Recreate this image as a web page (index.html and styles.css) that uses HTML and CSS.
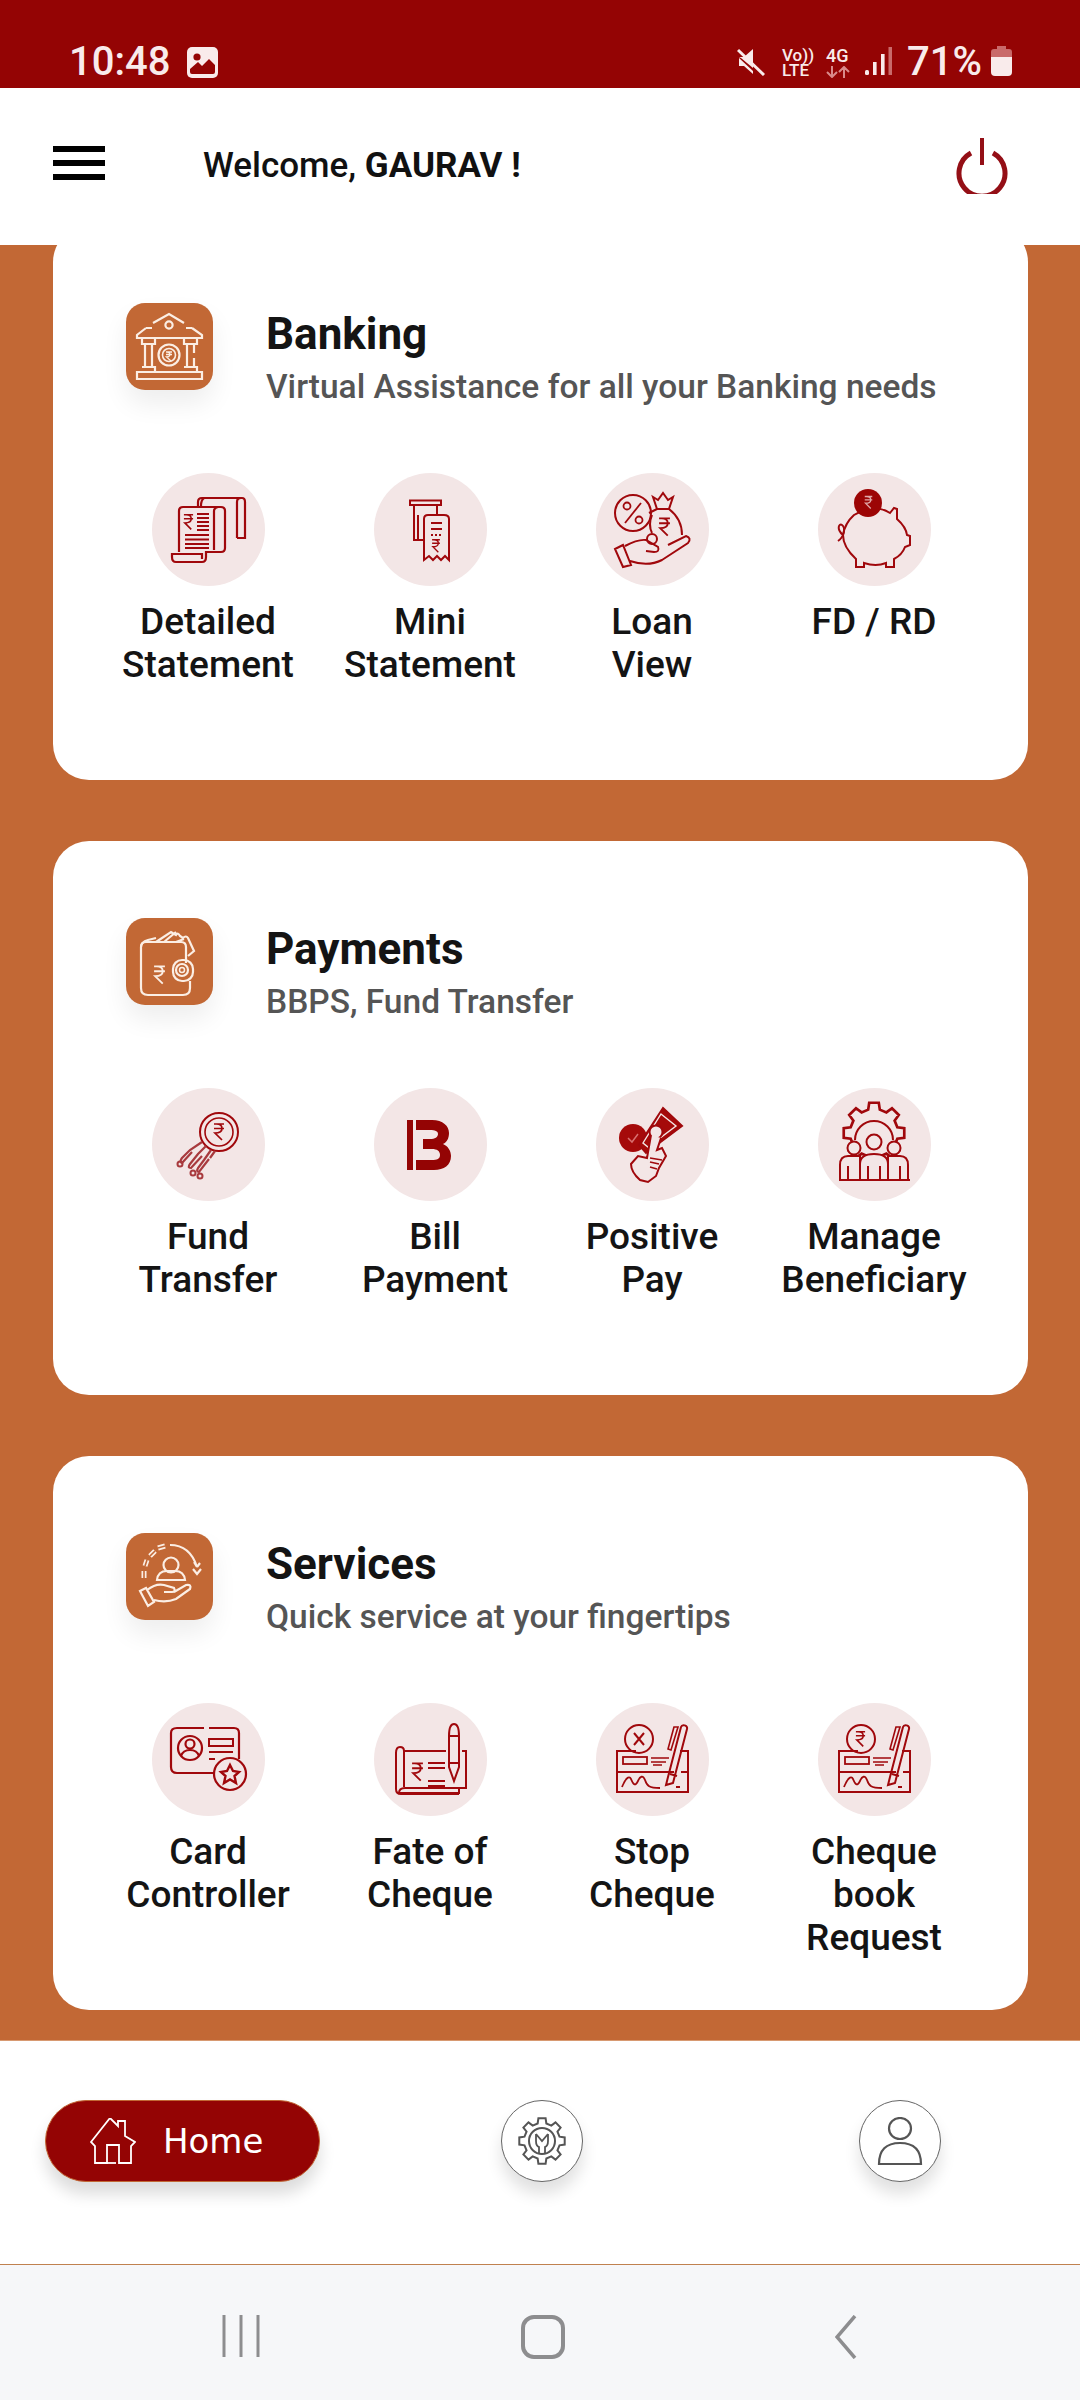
FILE: index.html
```html
<!DOCTYPE html>
<html lang="en">
<head>
<meta charset="utf-8">
<title>Welcome</title>
<link rel="stylesheet" href="styles.css">
</head>
<body>
<svg class="defs" width="0" height="0" aria-hidden="true">
  <defs>
    <symbol id="rupee" viewBox="0 0 12 18" overflow="visible"><path d="M1 1H11M1 5.5H11M3.5 1C8 1 9 3 9 5.5C9 8 7 10 2 10L9 17" fill="none" stroke="currentColor" stroke-width="1.7"/></symbol>
    <symbol id="gear" viewBox="0 0 48 48"><path transform="translate(24 24)" d="M-4.35-17.5L-3.6-22.7L3.6-22.7L4.35-17.5L9.3-15.45L13.5-18.6L18.6-13.5L15.45-9.3L17.5-4.35L22.7-3.6L22.7 3.6L17.5 4.35L15.45 9.3L18.6 13.5L13.5 18.6L9.3 15.45L4.35 17.5L3.6 22.7L-3.6 22.7L-4.35 17.5L-9.3 15.45L-13.5 18.6L-18.6 13.5L-15.45 9.3L-17.5 4.35L-22.7 3.6L-22.7-3.6L-17.5-4.35L-15.45-9.3L-18.6-13.5L-13.5-18.6L-9.3-15.45Z" fill="none" stroke="currentColor" stroke-width="2"/></symbol>
    <symbol id="cheque" viewBox="0 0 113 113">
      <path d="M40 48H21V89H92V48H84M21 69H78M85 69H92" fill="none" stroke="currentColor" stroke-width="2"/>
      <rect x="27" y="54" width="24" height="7" fill="none" stroke="currentColor" stroke-width="1.8"/>
      <path d="M55 55H73M55 59H70M57 62H66" fill="none" stroke="currentColor" stroke-width="1.6"/>
      <path d="M26 84C29 76 33 72 35 76C37 81 39 84 42 78C44 73 47 72 49 77C51 83 53 85 64 85" fill="none" stroke="currentColor" stroke-width="1.8"/>
      <path d="M77 80L70 82L72 74L85 24C86 21 92 22 91 26ZM74 71L81 73M80 84H84" fill="none" stroke="currentColor" stroke-width="2"/>
      <path d="M78 24L72 46L75 47L82 24Z" fill="none" stroke="currentColor" stroke-width="1.6"/>
    </symbol>
  </defs>
</svg>
<div class="phone">
  <div class="statusbar">
    <div class="status-left">
      <span class="clock">10:48</span>
      <svg class="status-image" viewBox="0 0 31 31"><rect width="31" height="31" rx="5" fill="#f9ebeb"/><circle cx="10" cy="10" r="3.6" fill="#940404"/><path d="M3 25V22L11 15L15 19L22 12L28 18V25Q28 27 26 27H5Q3 27 3 25Z" fill="#940404"/></svg>
    </div>
    <div class="status-right">
      <svg class="status-mute" viewBox="0 0 28 28"><path d="M2 9H7L16 1V20L4 10ZM2 10V18H7L16 26V23Z" fill="#f9ebeb"/><path d="M1 2L27 27" stroke="#f9ebeb" stroke-width="3"/></svg>
      <span class="volte"><span>Vo))</span><span>LTE</span></span>
      <span class="net"><span>4G</span><svg class="net-arrows" viewBox="0 0 25 12"><path d="M6 0V11M1 6L6 11L11 6M18 12V1M13 6L18 1L23 6" fill="none" stroke="#d98a8a" stroke-width="2"/></svg></span>
      <svg class="status-signal" viewBox="0 0 27 30"><rect y="24" width="4" height="5" rx="1.5" fill="#f9ebeb"/><rect x="8" y="16" width="3.6" height="13" fill="#f9ebeb"/><rect x="16" y="8" width="3.6" height="21" fill="#f9ebeb"/><rect x="23.5" y="1" width="3.5" height="28" fill="#c96a6a"/></svg>
      <span class="battery-pct">71%</span>
      <svg class="status-battery" viewBox="0 0 21 30"><path d="M6 0H15V3H18Q21 3 21 6V11H0V6Q0 3 3 3H6Z" fill="#c96a6a"/><path d="M0 11H21V26Q21 30 17 30H4Q0 30 0 26Z" fill="#f9ebeb"/></svg>
    </div>
  </div>

  <header class="topbar">
    <div class="menu-btn"><span></span><span></span><span></span></div>
    <p class="welcome">Welcome, <b>GAURAV !</b></p>
    <svg class="power" viewBox="0 0 52 56"><path d="M15 15A23 23 0 1 0 37 15" fill="none" stroke="#940f16" stroke-width="5"/><path d="M26 0V27" stroke="#940f16" stroke-width="4"/></svg>
  </header>

  <main class="content">
    <section class="card card-first">
      <div class="card-head">
        <div class="head-icon">
          <svg viewBox="0 0 87 87" fill="none" stroke="#fbeee4" stroke-width="2.2">
            <path d="M27 20L43 11L58 20M20 25L11 32V35H76V32L66 25M20 25H26M60 25H66"/><circle cx="43" cy="22" r="3.6"/>
            <path d="M16 35V41H29V35M58 35V41H71V35M19 41V64M26 41V64M61 41V64M68 41V50M68 55V64M16 64H29V69M58 64H71V69M11 69H76V76H11Z"/>
            <circle cx="43" cy="52" r="10.5"/><circle cx="43" cy="52" r="6.5" stroke-width="1.6"/>
            <path d="M40 49H46M40 51.500H46M41 49C45 49 45 54 40.500 54L45 58" stroke-width="1.3"/>
          </svg>
        </div>
        <div class="head-text"><h2>Banking</h2><p>Virtual Assistance for all your Banking needs</p></div>
      </div>
      <div class="items">
        <div class="item">
          <div class="bubble"><svg viewBox="0 0 113 113" fill="none" stroke="#a0080c" stroke-width="2.2">
            <path d="M46 33V29Q46 25 50 25H90Q93 25 93 29V65H85"/><path d="M52 25Q49 27 49 33M85 65V29Q85 25 89 25" />
            <path d="M27 79V38Q27 34 31 34H69Q73 34 73 38V75Q73 79 69 79H54V84Q54 89 50 89H24Q20 89 20 84V81H50V86"/>
            <path d="M66 34Q62 35 62 38V77"/>
            <use href="#rupee" x="31" y="40" width="11" height="18" color="#a0080c" stroke="none"/>
            <path d="M45 41H57M45 45H57M45 49H57M45 53H57M45 57H57" stroke-width="1.9"/>
            <path d="M33 62H57M33 66.500H57M33 71H57M33 75H57" stroke-width="2.2"/>
          </svg></div>
          <span class="label">Detailed Statement</span>
        </div>
        <div class="item">
          <div class="bubble"><svg viewBox="0 0 113 113" fill="none" stroke="#a0080c" stroke-width="2">
            <rect x="36" y="27.500" width="31" height="4.500" stroke-width="2"/><path d="M40 32V67H49M63 32V42"/><path d="M44 42V67"/>
            <path d="M50 87V46Q50 42 54 42H70Q75 42 75 46V87L71 83L67 87L63 83L59 87L55 83Z"/>
            <path d="M57 50H68M57 56H68M57 62H59M61 62H63M65 62H67" stroke-width="1.9"/>
            <use href="#rupee" x="57" y="66" width="10" height="14" color="#a0080c" stroke="none"/>
          </svg></div>
          <span class="label">Mini Statement</span>
        </div>
        <div class="item">
          <div class="bubble"><svg viewBox="0 0 113 113" fill="none" stroke="#a0080c" stroke-width="2">
            <circle cx="37" cy="40" r="18"/><path d="M29 50L45 30" stroke-width="1.8"/><circle cx="31" cy="33" r="3.500" stroke-width="1.8"/><circle cx="43" cy="47" r="3.500" stroke-width="1.8"/>
            <path d="M61 36L57 24L62 27L67 20L72 27L77 24L73 36Q86 46 86 62"/><path d="M61 36H73"/><path d="M53 40Q61 36 61 36M56 60Q52 52 56 42"/>
            <use href="#rupee" x="62" y="44" width="13" height="20" color="#a0080c" stroke="none"/>
            <path d="M19 76L27 72L35 92L27 94ZM29 73Q42 66 50 67L62 74Q64 79 58 79L50 78M34 88Q52 94 66 87L92 70Q96 65 90 63L72 72"/>
            <circle cx="56" cy="66" r="5"/>
          </svg></div>
          <span class="label">Loan<br>View</span>
        </div>
        <div class="item">
          <div class="bubble"><svg viewBox="0 0 113 113" fill="none" stroke="#a0080c" stroke-width="2">
            <path d="M36 42Q57 30 72 40L76 35L79 36V46Q88 54 89 62L92 63V72L87 74Q84 82 76 86V94H68V90Q58 94 46 90V94H38V86Q25 74 25 62Q27 50 36 42Z"/>
            <path d="M25 62C18 56 21 50 24 52C28 55 26 64 20 68"/>
            <circle cx="50" cy="30" r="14" fill="#9c0505" stroke="none"/>
            <use href="#rupee" x="46" y="22" width="9" height="15" color="#e0a8a8" stroke="none"/>
          </svg></div>
          <span class="label">FD / RD</span>
        </div>
      </div>
    </section>

    <section class="card">
      <div class="card-head">
        <div class="head-icon">
          <svg viewBox="0 0 87 87" fill="none" stroke="#fbeee4" stroke-width="2.200">
            <path d="M60 45V29Q60 24 55 24H20Q15 24 15 29V70Q15 77 22 77H57Q64 77 64 70V63"/>
            <path d="M15 29Q15 24 22 22L30 20M30 24L45 14L50 17Q52 14 54 18L57 20Q60 17 62 20L68 33L62 38M38 24L50 14M50 24L58 21"/>
            <rect x="47" y="42" width="20" height="21" rx="9"/><circle cx="56" cy="52" r="6"/><circle cx="56" cy="52" r="2.500" stroke-width="1.500"/>
            <use href="#rupee" x="27" y="47" width="13" height="20" color="#fbeee4" stroke="none"/>
          </svg>
        </div>
        <div class="head-text"><h2>Payments</h2><p>BBPS, Fund Transfer</p></div>
      </div>
      <div class="items">
        <div class="item">
          <div class="bubble"><svg viewBox="0 0 113 113" fill="none" stroke="#a83a3e" stroke-width="2">
            <circle cx="67" cy="44" r="19" stroke="#a0080c"/><circle cx="67" cy="44" r="14" stroke="#a0080c" stroke-width="1.600"/>
            <use href="#rupee" x="61" y="35" width="12" height="18" color="#a0080c" stroke="none"/>
            <path d="M50 54L38 62L30 70Q27 74 30 75L40 64M54 58L46 66L38 76Q35 80 39 80L50 68M59 62L52 72L46 80Q44 84 47 84L57 71M63 63L58 70" stroke-width="2.200"/>
            <circle cx="28" cy="76" r="2.500"/><circle cx="41" cy="85" r="2.500"/><circle cx="48" cy="88" r="2.500"/>
          </svg></div>
          <span class="label">Fund<br>Transfer</span>
        </div>
        <div class="item">
          <div class="bubble"><svg viewBox="0 0 113 113"><path fill="#940404" d="M33 32H39V82H33ZM42 32H58C69 32 75 38 75 45C75 50 73 54 69 56C74 58 77 63 77 68C77 77 70 82 60 82H42V72H58C63 72 66 71 66 67C66 63 63 61 58 61H49V51H56C61 51 64 49 64 46C64 43 61 42 56 42H42Z"/></svg></div>
          <span class="label label-shift">Bill Payment</span>
        </div>
        <div class="item">
          <div class="bubble"><svg viewBox="0 0 113 113" fill="none" stroke="#a0080c" stroke-width="2">
            <circle cx="37" cy="50" r="14" fill="#a50a0a" stroke="none"/><path d="M32 50L36 54L42 46" stroke="#d87070" stroke-width="1.500"/>
            <path d="M67 20L86 38L50 65L43 57Z" fill="#a50a0a"/><path d="M65 26L80 38L52 59L47 55Z" stroke="#f3e6e6" stroke-width="1.400"/>
            <circle cx="60" cy="44" r="6.500" fill="#f3e6e6"/>
            <path d="M55 47L51 70L42 68L35 76Q35 84 44 92L52 94L60 88L63 80L70 68L66 60L61 62L65 50" fill="#f3e6e6"/>
            <path d="M54 74L63 76M54 79L61 81M54 70L66 72" stroke-width="1.600"/>
          </svg></div>
          <span class="label">Positive<br>Pay</span>
        </div>
        <div class="item">
          <div class="bubble"><svg viewBox="0 0 113 113" fill="none" stroke="#a0080c" stroke-width="2">
            <use href="#gear" x="24" y="13" width="64" height="64" color="#a0080c"/>
            <path d="M37 52A19 19 0 0 1 75 52"/>
            <rect x="21" y="40" width="71" height="15" fill="none" stroke="none"/>
            <path d="M22 92V77Q22 68 30 68H42V92ZM90 92V77Q90 68 82 68H70V92ZM42 92V76Q42 66 56 66Q70 66 70 76V92Z" fill="#f3e6e6"/>
            <path d="M30 78V92M82 78V92M50 78V92M62 78V92M21 92H92"/>
            <circle cx="36" cy="60" r="6.500" fill="#f3e6e6"/><circle cx="76" cy="60" r="6.500" fill="#f3e6e6"/><circle cx="56" cy="54" r="7.500" fill="#f3e6e6"/>
          </svg></div>
          <span class="label">Manage Beneficiary</span>
        </div>
      </div>
    </section>

    <section class="card">
      <div class="card-head">
        <div class="head-icon">
          <svg viewBox="0 0 87 87" fill="none" stroke="#fbeee4" stroke-width="2.200">
            <circle cx="45" cy="32" r="7.500"/><path d="M31 47Q32 38 41 38H49Q58 38 59 47Z"/>
            <path d="M44 12Q64 12 71 34M71 34L68 29M71 34L74 30M67 36L71 41L75 36"/>
            <path d="M18 45L18 38M19 33L21 27M24 23L29 18M32 15L39 13" stroke-width="5"/><path d="M18 45L18 38M19 33L21 27M24 23L29 18M32 15L39 13" stroke="#c26835" stroke-width="1.600"/>
            <path d="M14 58L20 55L28 69L22 73ZM21 57Q30 50 38 52L48 55Q50 59 46 59L38 59M28 67Q40 70 50 66L64 56Q66 51 60 52L48 59"/>
          </svg>
        </div>
        <div class="head-text"><h2>Services</h2><p>Quick service at your fingertips</p></div>
      </div>
      <div class="items">
        <div class="item">
          <div class="bubble"><svg viewBox="0 0 113 113" fill="none" stroke="#a0080c" stroke-width="2.200">
            <path d="M52 25H25Q19 25 19 30V64Q19 70 25 70H63M57 25H82Q87 25 87 30V56"/>
            <circle cx="38" cy="45" r="12"/><circle cx="38" cy="41" r="4.500"/><path d="M29 53Q31 47 38 47Q45 47 47 53"/>
            <rect x="57" y="36" width="24" height="7" stroke-width="2"/><path d="M57 49H81M57 56H63" stroke-width="2.200"/>
            <circle cx="78" cy="71" r="16" fill="#f3e6e6"/><path d="M78 62L81 68L87 69L82.500 73L84 80L78 76.500L72 80L73.500 73L69 69L75 68Z" stroke-width="2.400"/>
          </svg></div>
          <span class="label">Card Controller</span>
        </div>
        <div class="item">
          <div class="bubble"><svg viewBox="0 0 113 113" fill="none" stroke="#a0080c" stroke-width="2">
            <path d="M30 48H72M88 48H92V85H31Q25 85 25 90H85V85M30 48Q30 44 26 44Q22 44 22 50V86Q22 91 27 91H85"/><path d="M30 48V84"/>
            <use href="#rupee" x="37" y="58" width="13" height="22" color="#a0080c" stroke="none"/>
            <path d="M54 60H71M54 65H71M54 78H71M54 83H71" stroke-width="2"/>
            <path d="M75 33V64L80 78L85 64V33Q85 21 80 21Q75 21 75 33ZM75 33H85M75 60H85" fill="#f3e6e6"/>
          </svg></div>
          <span class="label">Fate of Cheque</span>
        </div>
        <div class="item">
          <div class="bubble"><svg viewBox="0 0 113 113" fill="none" stroke="#a0080c" stroke-width="2">
            <use href="#cheque" x="0" y="0" width="113" height="113" color="#a0080c"/>
            <circle cx="43" cy="36" r="14"/><path d="M38 30L48 42M48 30L38 42"/>
          </svg></div>
          <span class="label">Stop<br>Cheque</span>
        </div>
        <div class="item">
          <div class="bubble"><svg viewBox="0 0 113 113" fill="none" stroke="#a0080c" stroke-width="2">
            <use href="#cheque" x="0" y="0" width="113" height="113" color="#a0080c"/>
            <circle cx="43" cy="36" r="14"/>
            <use href="#rupee" x="37" y="27" width="11" height="18" color="#a0080c" stroke="none"/>
          </svg></div>
          <span class="label">Cheque book Request</span>
        </div>
      </div>
    </section>
  </main>

  <nav class="tabbar">
    <div class="tab-home">
      <svg viewBox="0 0 46 46" fill="none" stroke="#fff" stroke-width="1.800"><path d="M1 24L20 0L28 8V3H35V18L45 24L41 28V45H29V27H17V45H5V28Z"/><path d="M8 45H26" /></svg>
      <span>Home</span>
    </div>
    <div class="tab-round">
      <svg viewBox="0 0 48 48" fill="none" stroke="#555" stroke-width="2"><use href="#gear" width="48" height="48" color="#555"/><circle cx="24" cy="24" r="13"/><path d="M18 17V24Q18 29 21 30V37M30 17V24Q30 29 27 30V37M18 17L24 24L30 17" stroke-width="1.800"/></svg>
    </div>
    <div class="tab-round">
      <svg viewBox="0 0 48 48" fill="none" stroke="#555" stroke-width="2.200"><ellipse cx="24" cy="11.500" rx="11" ry="10.500"/><path d="M3 47Q3 26 24 26Q45 26 45 47ZM3 47H45" /></svg>
    </div>
  </nav>

  <div class="sysnav">
    <svg class="sys-recent" viewBox="0 0 38 42"><path d="M2 0V42M19 0V42M36 0V42" stroke="#8d8d8f" stroke-width="3"/></svg>
    <svg class="sys-home" viewBox="0 0 44 44"><rect x="2" y="2" width="40" height="40" rx="11" fill="none" stroke="#8d8d8f" stroke-width="4"/></svg>
    <svg class="sys-back" viewBox="0 0 22 44"><path d="M20 1L2 22L20 43" fill="none" stroke="#8d8d8f" stroke-width="3.500"/></svg>
  </div>
</div>
</body>
</html>
```

FILE: styles.css
```css
* { box-sizing: border-box; }
html, body { margin: 0; padding: 0; background: #fff; }
body { font-family: Roboto, "Noto Sans", sans-serif; color: #111; }
.defs { position: absolute; }
svg { display: block; }

.phone { width: 1080px; height: 2400px; display: flex; flex-direction: column; overflow: hidden; }

/* status bar */
.statusbar { height: 88px; flex: none; background: #940404; color: #f9ebeb; display: flex; justify-content: space-between; padding: 46px 68px 0 69px; }
.status-left { display: flex; align-items: flex-start; gap: 17px; }
.clock { font-size: 40px; font-weight: 500; line-height: 32px; }
.status-image { width: 31px; height: 31px; margin-top: 1px; }
.status-right { display: flex; align-items: flex-start; }
.status-mute { width: 28px; height: 28px; margin: 2px 17px 0 0; }
.volte { display: flex; flex-direction: column; width: 31px; margin-right: 13px; font-size: 17px; font-weight: 500; line-height: 15px; white-space: nowrap; margin-top: 2px; }
.net { display: flex; flex-direction: column; width: 25px; margin-right: 14px; font-size: 18px; font-weight: 500; line-height: 17px; margin-top: 1px; }
.net-arrows { width: 25px; height: 12px; margin-top: 2px; }
.status-signal { width: 27px; height: 30px; margin-right: 15px; }
.battery-pct { font-size: 40px; font-weight: 500; line-height: 32px; margin-right: 8px; width: 76px; white-space: nowrap; }
.status-battery { width: 21px; height: 30px; }

/* top bar */
.topbar { height: 157px; flex: none; background: #fff; display: flex; align-items: center; padding: 0 72px 0 53px; position: relative; z-index: 2; }
.menu-btn { width: 52px; display: flex; flex-direction: column; gap: 8px; margin-top: -8px; }
.menu-btn span { height: 6px; background: #000; }
.welcome { margin: -2px 0 0 98px; font-size: 35px; font-weight: 500; flex: 1; color: #111; }
.welcome b { font-weight: 700; }
.power { width: 52px; height: 56px; margin-top: -1px; }

/* content */
.content { flex: 1; min-height: 0; background: #c26835; overflow: hidden; padding: 0 52px 0 53px; display: flex; flex-direction: column; gap: 61px; border-bottom: 1px solid #d89a72; }
.card { height: 554px; flex: none; background: #fff; border-radius: 36px; padding: 77px 43px 0 44px; }
.card-first { margin-top: -19px; }
.card-head { display: flex; gap: 53px; padding-left: 29px; height: 93px; }
.head-icon { width: 87px; height: 87px; flex: none; border-radius: 19px; background: #c26835; box-shadow: 0 14px 26px rgba(0, 0, 0, .07); }
.head-text { padding-top: 3px; }
.head-text h2 { margin: 0; font-size: 44px; line-height: 56px; font-weight: 700; color: #141414; }
.head-text p { margin: 5px 0 0; font-size: 33.500px; line-height: 40px; font-weight: 500; color: #555; white-space: nowrap; }

.items { display: grid; grid-template-columns: repeat(4, 222px); margin-top: 77px; }
.item { display: flex; flex-direction: column; align-items: center; }
.bubble { width: 113px; height: 113px; border-radius: 50%; background: #f3e6e6; }
.label { display: block; width: 200px; margin-top: 14px; text-align: center; font-size: 37px; line-height: 43px; font-weight: 500; color: #141414; }
.label-shift { position: relative; left: 5px; }

/* bottom tab bar */
.tabbar { height: 223px; flex: none; background: #fff; display: flex; align-items: flex-start; padding: 59px 0 0 45px; }
.tab-home { width: 275px; height: 82px; flex: none; border-radius: 41px; background: #940404; color: #fff; border: 1px solid #c26835; display: flex; align-items: center; gap: 27px; padding-left: 44px; box-shadow: 0 12px 16px rgba(0, 0, 0, .14); font-family: "DejaVu Sans", sans-serif; font-size: 34px; }
.tab-home svg { width: 46px; height: 46px; }
.tab-round { width: 82px; height: 82px; flex: none; border-radius: 50%; border: 1.500px solid #666; display: flex; align-items: center; justify-content: center; background: #fff; box-shadow: 0 12px 16px rgba(0, 0, 0, .12); margin-left: 181px; }
.tab-round svg { width: 48px; height: 48px; }
.tab-round + .tab-round { margin-left: 276px; }

/* system navigation */
.sysnav { height: 136px; flex: none; background: #f6f7f9; border-top: 1px solid #c0814f; position: relative; display: flex; align-items: flex-start; padding: 50px 0 0 222px; }
.sys-recent { width: 38px; height: 42px; }
.sys-home { width: 44px; height: 44px; margin-left: 261px; }
.sys-back { width: 22px; height: 44px; margin-left: 270px; }
```
